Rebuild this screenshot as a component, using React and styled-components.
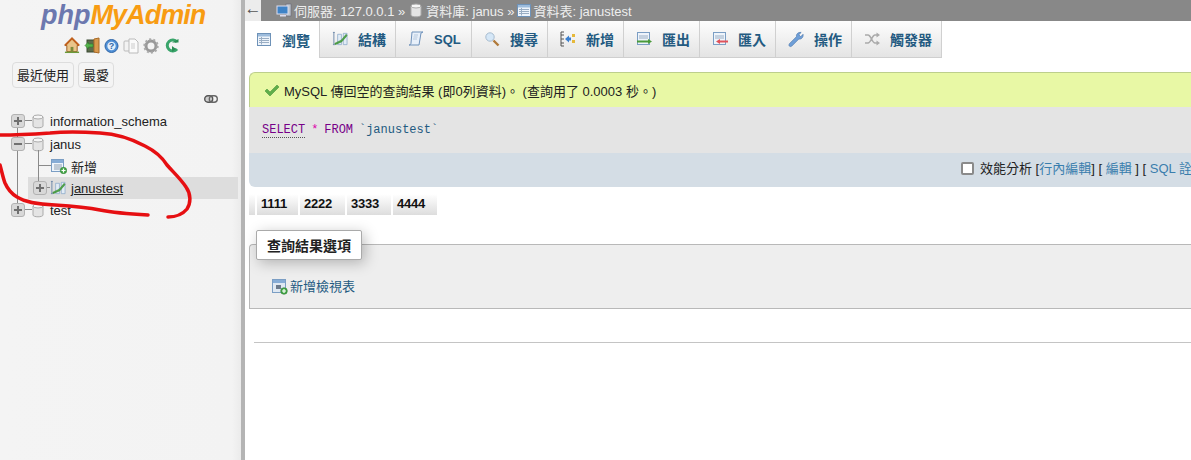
import React from "react";
import styled, { createGlobalStyle } from "styled-components";

const Global = createGlobalStyle`
  html, body { margin: 0; padding: 0; background: #fff; }
  body { width: 1191px; height: 460px; overflow: hidden; font-family: "Liberation Sans", "Noto Sans CJK TC", sans-serif; font-size: 13px; color: #111; }
`;

const Page = styled.div`
  position: relative; display: flex; width: 1191px; height: 460px; overflow: hidden;
`;
const Sidebar = styled.aside`
  position: relative; flex: 0 0 241px; height: 100%;
  background: linear-gradient(to right, #f4f4f4 0, #f3f3f3 232px, #ebebeb 241px);
  border-right: 4px solid #b4b4b4; box-sizing: content-box;
`;
const Logo = styled.div`
  font: italic bold 27px/30px "Liberation Sans", sans-serif; padding: 0 0 0 41px; height: 29px;
`;
const Php = styled.span`color: #6c78af;`;
const MyAdmin = styled.span`color: #f89c12; letter-spacing: -0.95px;`;
const IconRow = styled.div`
  display: flex; gap: 4px; align-items: center; padding-left: 64px; margin-top: 8px; height: 17px;
`;
const RecentRow = styled.div`
  display: flex; gap: 4px; padding-left: 12px; margin-top: 8px;
`;
const RecentButton = styled.div`
  height: 24px; line-height: 24px; padding: 0 4px; border: 1px solid #ddd; border-radius: 4px; background: #f4f4f4;
  font-size: 13px; color: #222; font-family: "Noto Sans CJK TC", sans-serif;
`;
const LinkIconWrap = styled.div`
  display: flex; justify-content: flex-end; padding-right: 23px; margin-top: 7px; height: 10px;
`;
const Tree = styled.div`
  position: relative; margin-top: 5px; display: flex; flex-direction: column;
`;
const TreeRow = styled.div`
  display: grid; align-items: center; height: 22px; margin-left: ${p => p.$left}px;
  grid-template-columns: ${p => p.$exp}px ${p => p.$ico}px 1fr;
  background: ${p => p.$active ? "#ddd" : "transparent"}; margin-right: ${p => p.$active ? 3 : 0}px;
  padding-left: ${p => p.$pad || 0}px; margin-bottom: ${p => p.$gap || 0}px;
`;
const Expander = styled.span`
  position: relative; display: block; width: 14px; height: 14px; border: 1px solid #b2b2b2; border-radius: 3px; box-sizing: border-box;
  background: #d8d8d8;
  &::before { content: ""; position: absolute; left: 2px; right: 2px; top: 5px; height: 2px; background: #707070; }
  &::after { content: ""; display: ${p => p.$open ? "none" : "block"}; position: absolute; top: 2px; bottom: 2px; left: 5px; width: 2px; background: #707070; }
`;
const Label = styled.span`
  font-size: 13px; color: #222; white-space: nowrap; text-decoration: ${p => p.$link ? "underline" : "none"};
  font-family: "Liberation Sans", "Noto Sans CJK TC", sans-serif;
`;
const Line = styled.span`
  position: absolute; background: #8a8a8a; left: ${p => p.$x}px; top: ${p => p.$y}px;
  width: ${p => p.$w || 1}px; height: ${p => p.$h || 1}px;
`;
const Main = styled.main`
  flex: 1; min-width: 0; display: flex; flex-direction: column; background: #fff;
`;
const Crumbs = styled.div`
  display: flex; align-items: center; height: 21px; background: #888; color: #eee; white-space: nowrap;
  font-size: 13px;
`;
const BackBox = styled.div`
  display: flex; align-items: center; justify-content: center; width: 16px; height: 21px; padding-bottom: 4px; box-sizing: border-box;
  margin-right: 15px; background: #ececec; color: #555; font-size: 17px;
`;
const Crumb = styled.span`
  margin: 0 ${p => p.$after}px 0 ${p => p.$before}px;
`;
const Tabs = styled.nav`
  display: flex; height: 37px; box-sizing: border-box; margin-bottom: 14px;
`;
const Tab = styled.div`
  display: flex; align-items: center; gap: 10px; padding: 0 9px 0 ${p => p.$active ? 11 : 12}px; height: 37px; box-sizing: border-box;
  font: bold 14px "Liberation Sans", "Noto Sans CJK TC", sans-serif; color: #235a81; white-space: nowrap;
  background: ${p => p.$active ? "#fff" : "linear-gradient(#fdfdfd, #e4e4e4)"};
  border-right: 1px solid #d0d0d0; border-bottom: ${p => p.$active ? "none" : "1px solid #cfcfcf"};
`;
const TabLabel = styled.span`
  min-width: 28px; font-size: ${p => p.$latin ? 13 : 14}px;
`;
const Success = styled.div`
  display: flex; align-items: center; gap: 4px; margin-left: 4px; height: 35px; box-sizing: border-box; padding-left: 14px;
  background: #e8f8a5; border: 1px solid #bdcf8c; border-bottom: none; border-right: none; border-top-left-radius: 6px;
  font-size: 13px; color: #222; white-space: nowrap;
`;
const SqlBox = styled.div`
  display: flex; align-items: center; margin-left: 4px; height: 46px; padding-left: 13px; background: #e4e4e4;
`;
const SqlText = styled.code`
  font: 12px/14px "Liberation Mono", monospace; white-space: pre; word-spacing: -1.3px;
`;
const Kw = styled.span`color: #770088; ${p => p.$dot && "border-bottom: 1px dotted #555;"}`;
const Star = styled.span`color: #dd00aa;`;
const Ident = styled.span`color: #235a81;`;
const Tools = styled.div`
  display: flex; align-items: center; margin-left: 4px; height: 34px; box-sizing: border-box; padding: 0 0 5px 712px; background: #d4dde5; border-bottom-left-radius: 6px;
  white-space: nowrap; font-size: 13px; color: #222; gap: 6px;
`;
const Check = styled.span`
  display: block; flex: none; width: 13px; height: 13px; box-sizing: border-box; border: 2px solid #8a8a8a; border-radius: 2px; background: #fff; margin-top: 2px;
`;
const BlueLink = styled.span`color: #3a7ead;`;
const ResultHead = styled.div`
  display: flex; gap: 2px; margin: 7px 0 0 4px; height: 21px;
`;
const HeadCell = styled.div`
  display: flex; align-items: center; padding: 0 0 2px 4px; box-sizing: border-box; width: ${p => p.$w}px; height: 21px;
  font: bold 13px "Liberation Sans", sans-serif; letter-spacing: -0.2px; color: #111; background: linear-gradient(#fff, #ddd);
`;
const Field = styled.section`
  position: relative; margin: 29px 0 0 4px; height: 65px; box-sizing: border-box;
  background: #eee; border: 1px solid #b8b8b8; border-right: none; border-top-left-radius: 4px;
  display: flex; align-items: flex-end; padding: 0 0 13px 22px; gap: 2px;
`;
const Legend = styled.div`
  position: absolute; left: 6px; top: -15px; width: 106px; height: 30px; box-sizing: border-box; display: flex; align-items: center; justify-content: center;
  background: #fff; border: 1px solid #aaa; border-radius: 2px; box-shadow: 3px 3px 14px rgba(0,0,0,.25);
  font: bold 14px "Liberation Sans", "Noto Sans CJK TC", sans-serif; color: #222;
`;
const ViewLink = styled.span`color: #235a81; font-size: 13px;`;
const Rule = styled.hr`
  margin: 33px 0 0 9px; border: none; height: 1px; background: #c4c4c4;
`;
const Scribble = styled.svg`
  position: absolute; left: 0; top: 0; pointer-events: none;
`;

const Home = () => (
  <svg width="16" height="17" viewBox="0 0 17 17"><path d="M8.500 1 1 8.500h2V15h11V8.500h2z" fill="#e9c58a" stroke="#9a5a1e" /><path d="M1 8.500 8.500 1 16 8.500" fill="none" stroke="#c0601c" strokeWidth="2" /><rect x="7" y="10" width="3" height="5" fill="#7a8a3a" /><rect x="1" y="15" width="15" height="1.500" fill="#6b9a3a" /></svg>
);
const Exit = () => (
  <svg width="16" height="17" viewBox="0 0 16 17"><rect x="3" y="3" width="8" height="12" fill="#5c6b4c" stroke="#3a4a33" /><path d="M10 2l5-1v15l-5-1z" fill="#d99a4e" stroke="#a86a26" /><path d="M1 8.500 4.500 5v2H9v3H4.500v2z" fill="#54b34a" stroke="#2f7d2a" strokeWidth=".6" /></svg>
);
const Help = () => (
  <svg width="15" height="16" viewBox="0 0 15 16"><circle cx="7.500" cy="8" r="6.500" fill="#4f8fd6" stroke="#2f66a8" /><circle cx="7.500" cy="8" r="4.200" fill="#e3effa" /><text x="7.500" y="11" textAnchor="middle" fontSize="9" fontWeight="bold" fill="#2f66a8" fontFamily="Liberation Sans">?</text></svg>
);
const Docs = () => (
  <svg width="16" height="16" viewBox="0 0 16 16"><rect x="1" y="3" width="7" height="10" rx="1" fill="#f2f2f2" stroke="#bbb" /><path d="M6 1h6l3 3v11H6z" fill="#fafafa" stroke="#bbb" /><path d="M8 6h4M8 8h4M8 10h4" stroke="#ccc" /></svg>
);
const Gear = () => (
  <svg width="16" height="16" viewBox="0 0 16 16"><circle cx="8" cy="8" r="5" fill="none" stroke="#999" strokeWidth="3" /><circle cx="8" cy="8" r="6.600" fill="none" stroke="#aaa" strokeWidth="2.200" strokeDasharray="2 2.150" /></svg>
);
const ReloadSvg = styled.svg`margin-left: 2px;`;
const Reload = () => (
  <ReloadSvg width="15" height="15" viewBox="0 0 13 15"><path d="M11 4A5.500 5.500 0 1 0 11 11" fill="none" stroke="#3aa56b" strokeWidth="3" /><path d="M6 4.500h6.500V1z" fill="#2c8c55" /><path d="M6 8l4 3-4 3z" fill="#2c8c55" /></ReloadSvg>
);
const Chain = () => (
  <svg width="14" height="8" viewBox="0 0 14 8"><rect x=".7" y=".7" width="8" height="6.600" rx="3.200" fill="#ccc" stroke="#555" strokeWidth="1.400" /><rect x="5.300" y=".7" width="8" height="6.600" rx="3.200" fill="none" stroke="#666" strokeWidth="1.400" /></svg>
);
const Db = () => (
  <svg width="12" height="15" viewBox="0 0 12 15"><path d="M1 3v9c0 2.400 10 2.400 10 0V3z" fill="#e4e4e4" stroke="#aaa" /><ellipse cx="6" cy="3" rx="5" ry="2" fill="#f6f6f6" stroke="#aaa" /></svg>
);
const TableAdd = () => (
  <svg width="16" height="16" viewBox="0 0 16 16"><rect x=".5" y="1.500" width="12" height="12" fill="#eef4fb" stroke="#7b9ec4" /><rect x="1" y="2" width="11" height="3" fill="#86acd6" /><path d="M3 7h8M3 9h8M3 11h8" stroke="#8f9fb0" /><circle cx="12.500" cy="12.500" r="3.200" fill="#45a848" stroke="#2c7d30" strokeWidth=".6" /><path d="M12.500 10.500v4M10.500 12.500h4" stroke="#fff" strokeWidth="1.200" /></svg>
);
const Structure = () => (
  <svg width="16" height="16" viewBox="0 0 17 16"><path d="M1 1h2M2 1v13M1 14h2" stroke="#6b86a8" fill="none" /><path d="M6 3h4v11H6zM12 2h4v12h-4z" fill="#e2ecf6" stroke="#8aa8c8" strokeWidth=".8" /><path d="M3 12.500 8 10l2-1 5-6 1 1.500-5.500 6.500-7 3z" fill="#4ea546" stroke="#2f7d2a" strokeWidth=".5" /></svg>
);
const Browse = () => (
  <svg width="16" height="16" viewBox="0 0 16 16"><rect x="1.500" y="1.500" width="13" height="12" fill="#eef4fb" stroke="#6e92b8" /><rect x="2" y="2" width="12" height="2.500" fill="#9dbcdc" /><path d="M3 6.500h10M3 8.500h10M3 10.500h10" stroke="#9aaec4" /><path d="M5.500 5v7.500" stroke="#9aaec4" /></svg>
);
const SqlIcon = () => (
  <svg width="16" height="16" viewBox="0 0 16 16"><path d="M4 1h11l-2 1-2 12H1c1.500 0 2-1 2-2z" fill="#e8f0fa" stroke="#6f92bb" /><path d="M6 4h4M5.500 6h4M5 8h4" stroke="#b6c8dc" /></svg>
);
const Search = () => (
  <svg width="16" height="16" viewBox="0 0 16 16"><circle cx="6" cy="6" r="4.200" fill="#d5e7f7" stroke="#a8bccf" /><path d="M9.500 9.500 14.500 14.500" stroke="#b07a3a" strokeWidth="2.400" /></svg>
);
const Insert = () => (
  <svg width="16" height="16" viewBox="0 0 16 16"><path d="M4 1H1v14h3M1 4h3M1 8h3M1 12h3" fill="none" stroke="#555" /><path d="M5 8l4-3.500v2h2v3H9v2z" fill="#3a80d0" /><rect x="12" y="3" width="3" height="3" fill="#e6b93a" /><rect x="12" y="9" width="3" height="3" fill="#e6b93a" /></svg>
);
const ExportIcon = () => (
  <svg width="16" height="16" viewBox="0 0 16 16"><rect x="1.500" y="1.500" width="12" height="12" fill="#eef4fb" stroke="#7b9ec4" /><path d="M3 5h9M3 7h9" stroke="#9aaec4" /><path d="M1 10.500h11" stroke="#4a9a3a" strokeWidth="2" /><path d="M12 8l4 2.500-4 2.500z" fill="#4a9a3a" /></svg>
);
const ImportIcon = () => (
  <svg width="16" height="16" viewBox="0 0 16 16"><rect x="1.500" y="1.500" width="12" height="12" fill="#eef4fb" stroke="#7b9ec4" /><path d="M3 5h9M3 7h9" stroke="#9aaec4" /><path d="M8 10.500h8" stroke="#e0525a" strokeWidth="2" /><path d="M8 8l-4 2.500 4 2.500z" fill="#e0525a" /></svg>
);
const Wrench = () => (
  <svg width="16" height="17" viewBox="0 0 17 17"><path d="M1.500 13 9 5.500C8.500 3 10.500.5 14 1l-2.500 2.500 2 2L16 3c.5 3.500-2 5.500-4.500 5L4 15.500c-2 1.500-3.800-.5-2.500-2.500z" fill="#6f9fd8" stroke="#4a76ab" strokeWidth=".7" /></svg>
);
const Shuffle = () => (
  <svg width="16" height="14" viewBox="0 0 16 14"><path d="M1 3h3c3 0 4 8 7 8h2M1 11h3c3 0 4-8 7-8h2" fill="none" stroke="#aaa" strokeWidth="1.600" /><path d="M12.500 0.500 16 3l-3.500 2.500zM12.500 8.500 16 11l-3.500 2.500z" fill="#aaa" /></svg>
);
const Computer = () => (
  <svg width="16" height="15" viewBox="0 0 16 15"><rect x="10" y="1" width="5" height="12" fill="#bcc4cc" stroke="#667" strokeWidth=".6" /><rect x="1" y="3" width="11" height="8" fill="#3f83c6" stroke="#dde" /><rect x="4" y="12" width="6" height="1.500" fill="#dde" /></svg>
);
const TickIcon = () => (
  <svg width="16" height="13" viewBox="0 0 16 13"><path d="M1 7l2-2 3 3 7-7 2 2-9 9z" fill="#5fae4a" stroke="#3d8a32" strokeWidth=".5" /></svg>
);
const ViewAdd = () => (
  <svg width="16" height="16" viewBox="0 0 16 16"><rect x=".5" y=".5" width="13" height="13" fill="#dfe8f2" stroke="#7b9ec4" /><rect x="1" y="1" width="12" height="3" fill="#86acd6" /><rect x="4" y="6" width="5" height="4" fill="#6c7a8c" /><circle cx="12" cy="12" r="3.300" fill="#45a848" stroke="#2c7d30" strokeWidth=".6" /><path d="M12 10v4M10 12h4" stroke="#fff" strokeWidth="1.200" /></svg>
);

const tabs = [
  ["瀏覽", <Browse />, true], ["結構", <Structure />], ["SQL", <SqlIcon />], ["搜尋", <Search />],
  ["新增", <Insert />], ["匯出", <ExportIcon />], ["匯入", <ImportIcon />], ["操作", <Wrench />], ["觸發器", <Shuffle />],
];

export default function App() {
  return (
    <Page>
      <Global />
      <Sidebar>
        <Logo><Php>php</Php><MyAdmin>MyAdmin</MyAdmin></Logo>
        <IconRow><Home /><Exit /><Help /><Docs /><Gear /><Reload /></IconRow>
        <RecentRow><RecentButton>最近使用</RecentButton><RecentButton>最愛</RecentButton></RecentRow>
        <LinkIconWrap><Chain /></LinkIconWrap>
        <Tree>
          <Line $x={17} $y={18} $h={77} />
          <Line $x={38} $y={40} $h={37} />
          <Line $x={25} $y={10} $w={7} />
          <Line $x={25} $y={33} $w={7} />
          <Line $x={25} $y={99} $w={7} />
          <Line $x={38} $y={55} $w={13} />
          <Line $x={47} $y={77} $w={3} />
          <TreeRow $left={11} $exp={21} $ico={18} $gap={1}><Expander /><Db /><Label>information_schema</Label></TreeRow>
          <TreeRow $left={11} $exp={21} $ico={18}><Expander $open /><Db /><Label>janus</Label></TreeRow>
          <TreeRow $left={51} $exp={0} $ico={20}><span /><TableAdd /><Label>新增</Label></TreeRow>
          <TreeRow $left={28} $pad={5} $exp={17} $ico={21} $active><Expander /><Structure /><Label $link>janustest</Label></TreeRow>
          <TreeRow $left={11} $exp={21} $ico={18}><Expander /><Db /><Label>test</Label></TreeRow>
        </Tree>
      </Sidebar>
      <Main>
        <Crumbs>
          <BackBox>←</BackBox>
          <Computer /><Crumb $before={2} $after={5}>伺服器: 127.0.0.1 »</Crumb>
          <Db /><Crumb $before={4} $after={2}>資料庫: janus »</Crumb>
          <Browse /><Crumb $before={1} $after={0}>資料表: janustest</Crumb>
        </Crumbs>
        <Tabs>
          {tabs.map(([t, icon, active]) => (
            <Tab key={t} $active={active}>{icon}<TabLabel $latin={t === "SQL"}>{t}</TabLabel></Tab>
          ))}
        </Tabs>
        <Success><TickIcon /><span>MySQL 傳回空的查詢結果 (即0列資料)。 (查詢用了 0.0003 秒。)</span></Success>
        <SqlBox>
          <SqlText><Kw $dot>SELECT</Kw> <Star>*</Star> <Kw>FROM</Kw> <Ident>`janustest`</Ident></SqlText>
        </SqlBox>
        <Tools>
          <Check />
          <span>效能分析 [<BlueLink>行內編輯</BlueLink>] [ <BlueLink>編輯</BlueLink> ] [ <BlueLink>SQL 詮釋</BlueLink> ]</span>
        </Tools>
        <ResultHead>
          <HeadCell $w={6} />
          <HeadCell $w={41}>1111</HeadCell>
          <HeadCell $w={45}>2222</HeadCell>
          <HeadCell $w={44}>3333</HeadCell>
          <HeadCell $w={44}>4444</HeadCell>
        </ResultHead>
        <Field>
          <Legend>查詢結果選項</Legend>
          <ViewAdd /><ViewLink>新增檢視表</ViewLink>
        </Field>
        <Rule />
      </Main>
      <Scribble width="200" height="230" viewBox="0 0 200 230">
        <path d="M0 135C18 135 35 134 50 133C70 131 85 132 100 133C118 134 132 139 145 146C155 151 162 157 167 165C173 172 180 178 186 187C191 194 191 203 187 209C182 215 175 217 168 217" fill="none" stroke="#e60f12" strokeWidth="3.500" strokeLinecap="round" />
        <path d="M0 165C2 172 3 178 5 183C8 190 12 194 17 197C25 202 35 204 55 205C70 206 85 207 100 210C115 213 130 214 148 215" fill="none" stroke="#e60f12" strokeWidth="3.500" strokeLinecap="round" />
      </Scribble>
    </Page>
  );
}
